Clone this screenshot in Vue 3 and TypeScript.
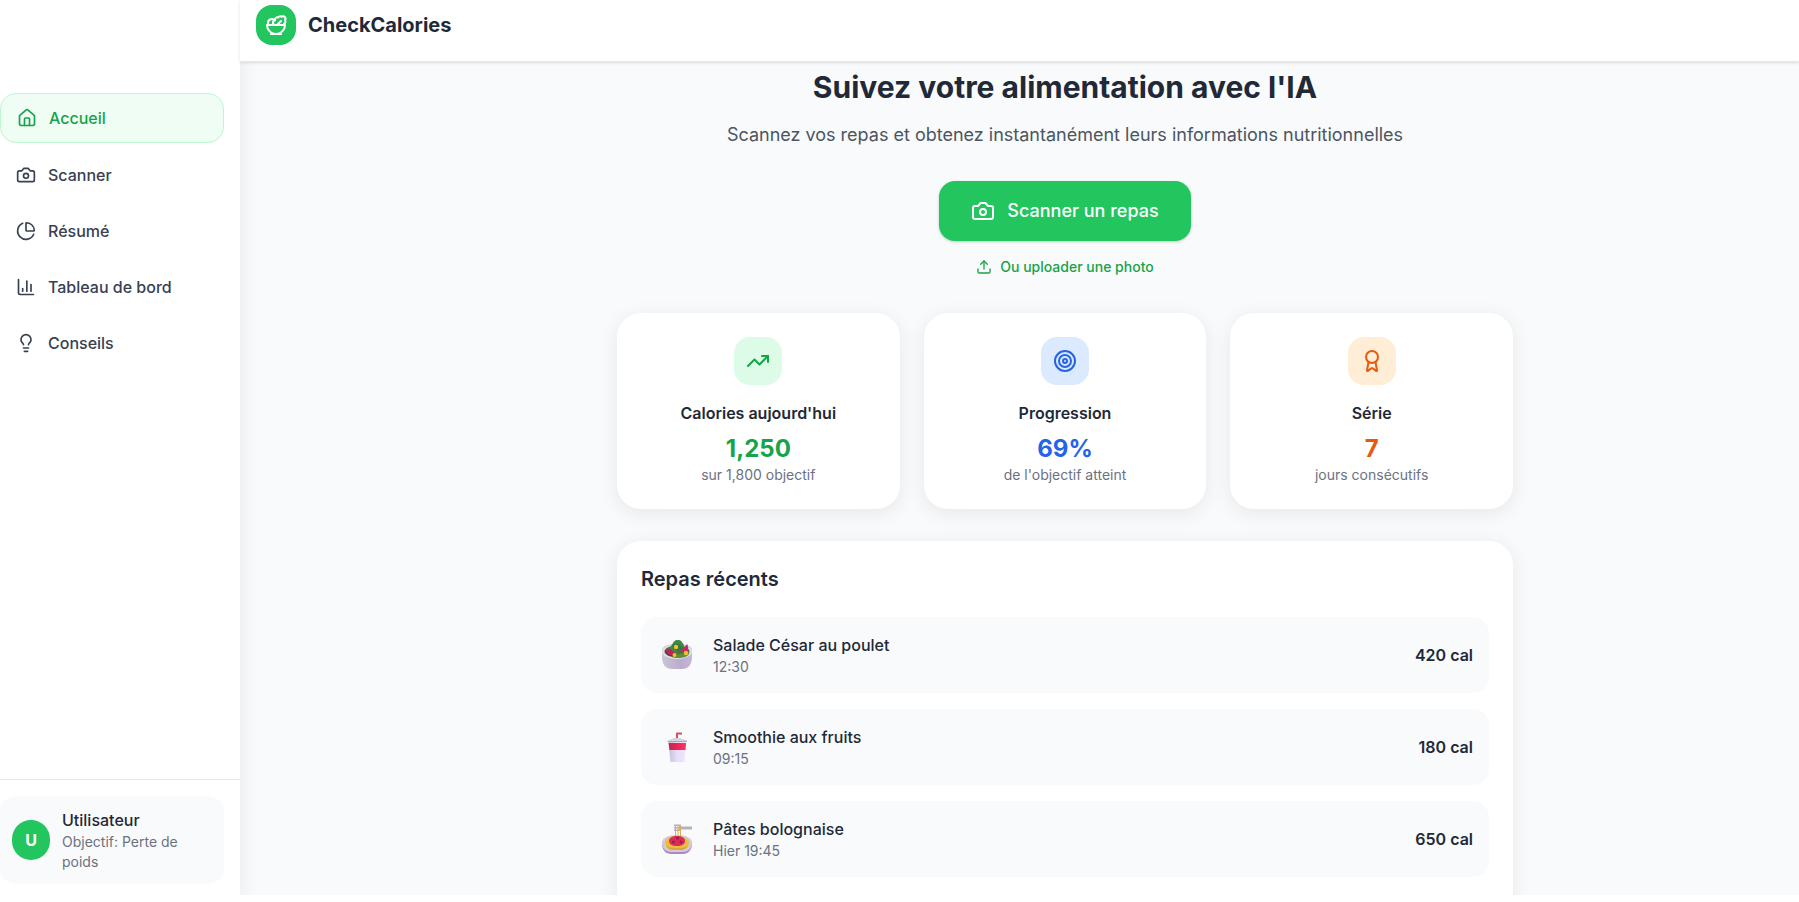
<script setup lang="ts">
interface Shape {
  paths: string[]
  circles?: [number, number, number][]
}

const icons: Record<string, Shape> = {
  salad: {
    paths: [
      'M7 21h10',
      'M12 21a9 9 0 0 0 9-9H3a9 9 0 0 0 9 9Z',
      'M11.38 12a2.4 2.4 0 0 1-.4-4.77 2.4 2.4 0 0 1 3.2-2.77 2.4 2.4 0 0 1 3.47-.63 2.4 2.4 0 0 1 3.37 3.37 2.4 2.4 0 0 1-1.1 3.7 2.51 2.51 0 0 1 .03 1.1',
      'm13 12 4-4',
      'M10.9 7.25A3.99 3.99 0 0 0 4 10c0 .73.2 1.41.54 2',
    ],
  },
  home: {
    paths: [
      'M15 21v-8a1 1 0 0 0-1-1h-4a1 1 0 0 0-1 1v8',
      'M3 10a2 2 0 0 1 .709-1.528l7-5.999a2 2 0 0 1 2.582 0l7 5.999A2 2 0 0 1 21 10v9a2 2 0 0 1-2 2H5a2 2 0 0 1-2-2z',
    ],
  },
  camera: {
    paths: ['M14.5 4h-5L7 7H4a2 2 0 0 0-2 2v9a2 2 0 0 0 2 2h16a2 2 0 0 0 2-2V9a2 2 0 0 0-2-2h-3l-2.5-3z'],
    circles: [[12, 13, 3]],
  },
  pie: {
    paths: [
      'M21 12c.552 0 1.005-.449.95-.998a10 10 0 0 0-8.953-8.951c-.55-.055-.998.398-.998.95v8a1 1 0 0 0 1 1z',
      'M21.21 15.89A10 10 0 1 1 8 2.83',
    ],
  },
  chart: { paths: ['M3 3v16a2 2 0 0 0 2 2h16', 'M18 17V9', 'M13 17V5', 'M8 17v-3'] },
  bulb: {
    paths: [
      'M15 14c.2-1 .7-1.7 1.5-2.5 1-.9 1.5-2.2 1.5-3.5A6 6 0 0 0 6 8c0 1 .2 2.2 1.5 3.5.7.7 1.3 1.5 1.5 2.5',
      'M9 18h6',
      'M10 22h4',
    ],
  },
  upload: { paths: ['M12 3v12', 'm17 8-5-5-5 5', 'M21 15v4a2 2 0 0 1-2 2H5a2 2 0 0 1-2-2v-4'] },
  trend: { paths: ['m22 7-8.5 8.5-5-5L2 17', 'M16 7h6v6'] },
  target: { paths: [], circles: [[12, 12, 10], [12, 12, 6], [12, 12, 2]] },
  award: {
    paths: [
      'm15.477 12.89 1.515 8.526a.5.5 0 0 1-.81.47l-3.58-2.687a1 1 0 0 0-1.197 0l-3.586 2.686a.5.5 0 0 1-.81-.469l1.514-8.526',
    ],
    circles: [[12, 8, 6]],
  },
}

const navItems = [
  { label: 'Accueil', icon: 'home', active: true },
  { label: 'Scanner', icon: 'camera', active: false },
  { label: 'Résumé', icon: 'pie', active: false },
  { label: 'Tableau de bord', icon: 'chart', active: false },
  { label: 'Conseils', icon: 'bulb', active: false },
]

const stats = [
  { tone: 'green', icon: 'trend', label: "Calories aujourd'hui", value: '1,250', note: 'sur 1,800 objectif' },
  { tone: 'blue', icon: 'target', label: 'Progression', value: '69%', note: "de l'objectif atteint" },
  { tone: 'orange', icon: 'award', label: 'Série', value: '7', note: 'jours consécutifs' },
]

const meals = [
  { kind: 'salad', name: 'Salade César au poulet', time: '12:30', calories: 420 },
  { kind: 'drink', name: 'Smoothie aux fruits', time: '09:15', calories: 180 },
  { kind: 'pasta', name: 'Pâtes bolognaise', time: 'Hier 19:45', calories: 650 },
]
</script>

<template>
  <div class="app">
    <aside class="sidebar">
      <nav class="nav" aria-label="Navigation principale">
        <a v-for="item in navItems" :key="item.label" href="#" class="nav-item" :class="{ active: item.active }">
          <svg class="icon icon-md" viewBox="0 0 24 24" aria-hidden="true">
            <path v-for="d in icons[item.icon].paths" :key="d" :d="d" />
            <circle v-for="c in icons[item.icon].circles" :key="c[2]" :cx="c[0]" :cy="c[1]" :r="c[2]" />
          </svg>
          <span>{{ item.label }}</span>
        </a>
      </nav>
      <div class="account">
        <div class="account-card">
          <div class="avatar">U</div>
          <div class="account-text">
            <p class="account-name">Utilisateur</p>
            <p class="account-goal">Objectif: Perte de poids</p>
          </div>
        </div>
      </div>
    </aside>

    <div class="page">
      <header class="topbar">
        <div class="logo">
          <svg class="icon icon-lg" viewBox="0 0 24 24" aria-hidden="true">
            <path v-for="d in icons.salad.paths" :key="d" :d="d" />
          </svg>
        </div>
        <span class="brand">CheckCalories</span>
      </header>

      <main class="content">
        <div class="column">
          <section class="hero">
            <h1>Suivez votre alimentation avec l'IA</h1>
            <p class="lead">Scannez vos repas et obtenez instantanément leurs informations nutritionnelles</p>
            <button type="button" class="scan">
              <svg class="icon icon-lg" viewBox="0 0 24 24" aria-hidden="true">
                <path v-for="d in icons.camera.paths" :key="d" :d="d" />
                <circle cx="12" cy="13" r="3" />
              </svg>
              <span>Scanner un repas</span>
            </button>
            <button type="button" class="upload">
              <svg class="icon icon-sm" viewBox="0 0 24 24" aria-hidden="true">
                <path v-for="d in icons.upload.paths" :key="d" :d="d" />
              </svg>
              <span>Ou uploader une photo</span>
            </button>
          </section>

          <section class="stats">
            <article v-for="stat in stats" :key="stat.label" class="stat card" :class="stat.tone">
              <div class="stat-icon">
                <svg class="icon icon-lg" viewBox="0 0 24 24" aria-hidden="true">
                  <path v-for="d in icons[stat.icon].paths" :key="d" :d="d" />
                  <circle v-for="c in icons[stat.icon].circles" :key="c[2]" :cx="c[0]" :cy="c[1]" :r="c[2]" />
                </svg>
              </div>
              <h3>{{ stat.label }}</h3>
              <p class="stat-value">{{ stat.value }}</p>
              <p class="note">{{ stat.note }}</p>
            </article>
          </section>

          <section class="meals card">
            <h2>Repas récents</h2>
            <ul>
              <li v-for="meal in meals" :key="meal.name" class="meal">
                <div class="meal-picture">
                  <svg v-if="meal.kind === 'salad'" viewBox="0 0 30 30" aria-hidden="true">
                    <defs>
                      <linearGradient id="bowl" x1="0" x2="1">
                        <stop offset="0" stop-color="#c9c5d2" />
                        <stop offset="0.6" stop-color="#bcadcd" />
                        <stop offset="1" stop-color="#c4b6d6" />
                      </linearGradient>
                    </defs>
                    <path d="M0 11C0 6 6 4 15 4s15 2 15 7v6c0 8-4 12-10 12H10C4 29 0 25 0 17z" fill="url(#bowl)" />
                    <ellipse cx="15" cy="11.500" rx="15" ry="7.500" fill="#e2dde9" />
                    <ellipse cx="15" cy="11.500" rx="12.500" ry="6" fill="#4d7a2b" />
                    <path d="M8 10c0-4 2-5 3-7 2-4 7-4 9-1 2 3 4 6 2 8-4 3-10 3-14 0z" fill="#3f8a44" />
                    <path d="M10 6c2-3 6-3 8-1 3 2 5 5 3 8-4 0-8-1-11-7z" fill="#357a40" />
                    <path d="M4 9c4-1 6 0 10 6-5 2-9 0-10-6z" fill="#c21e62" />
                    <path d="M4 10c1 5 5 6 10 5v1C8 17 4 15 3 11z" fill="#7c2448" />
                    <path d="M17 11c3-1 6-4 8-7 2 3 1 7-1 9z" fill="#cf236b" />
                    <path d="M10 17c6-2 11-5 17-3-2 4-12 5-17 3z" fill="#5b9138" />
                    <circle cx="14" cy="7" r="2.200" fill="#f4bf32" />
                    <circle cx="12.500" cy="15" r="2" fill="#f4bf32" />
                    <circle cx="24" cy="13" r="2.200" fill="#f4bf32" />
                  </svg>
                  <svg v-else-if="meal.kind === 'drink'" viewBox="0 0 30 30" aria-hidden="true">
                    <defs>
                      <linearGradient id="cup" x1="0" x2="1">
                        <stop offset="0" stop-color="#c9bedb" />
                        <stop offset="0.5" stop-color="#e8def8" />
                        <stop offset="1" stop-color="#efe4fc" />
                      </linearGradient>
                      <linearGradient id="sleeve" x1="0" x2="1">
                        <stop offset="0" stop-color="#bd2850" />
                        <stop offset="0.5" stop-color="#ed2458" />
                        <stop offset="1" stop-color="#fb3466" />
                      </linearGradient>
                    </defs>
                    <path d="M15 7V1.500h5" fill="none" stroke="#db4a66" stroke-width="2" stroke-linejoin="round" />
                    <path d="M10 8c0-2 2-2 5-2s5 0 5 2z" fill="#d3d1d5" />
                    <path d="M6 9.500C6 8 8 7 10 7h10c3 0 5 1 5 2.500z" fill="#d8d5dd" />
                    <path d="M6.500 10h17.500l-1.500 20h-14z" fill="url(#cup)" />
                    <path d="M6.500 11h17.500l-.5 7h-16z" fill="url(#sleeve)" />
                    <path d="M5.500 9.500h19.500" stroke="#aaa4b4" />
                  </svg>
                  <svg v-else viewBox="0 0 30 30" aria-hidden="true">
                    <path d="M0 20c0-5 6-8 15-8s15 3 15 8c0 6-4 10-9 10H9c-5 0-9-4-9-10z" fill="#a989c5" />
                    <path d="M0 19c0-5 6-8 15-8s15 3 15 8c0 5-4 9-9 9H9c-5 0-9-4-9-9z" fill="#d2c9d9" />
                    <path d="M3 19c0-4 5-7 12-7s12 3 12 7-4 7-8 7h-8c-4 0-8-3-8-7z" fill="#edbd3c" />
                    <path d="M4 21c3 3 6 3 11 3s8 0 11-3c-1 3-4 5-7 5h-8c-3 0-6-2-7-5z" fill="#dda534" />
                    <path d="M12 .500h7v2h11v3H19v1.500h-7v-1.500h5v-1h-5V3h5V2h-5z" fill="#b8b0bd" />
                    <path d="M13.500 2v11M16 2v11M18.500 2v11" fill="none" stroke="#dcae50" />
                    <path d="M7 17c0-3 3-5 8-5s8 2 8 5-3 5-8 5-8-2-8-5z" fill="#dc2a5a" />
                    <circle cx="15.500" cy="14" r="1.500" fill="#8f2740" />
                    <circle cx="11.500" cy="18" r="1.500" fill="#8f2740" />
                    <circle cx="19" cy="18" r="1.500" fill="#8f2740" />
                  </svg>
                </div>
                <div class="meal-text">
                  <p class="meal-name">{{ meal.name }}</p>
                  <p class="note">{{ meal.time }}</p>
                </div>
                <p class="meal-calories">{{ meal.calories }} cal</p>
              </li>
            </ul>
          </section>
        </div>
      </main>
    </div>
  </div>
</template>

<style>
body {
  background: #ffffff;
  overflow: hidden;
}
</style>

<style scoped>
.app {
  display: flex;
  height: calc(100vh - 7px);
  overflow: hidden;
  background: #f9fafb;
  color: #1f2937;
  font-family: Inter, "Liberation Sans", sans-serif;
  font-size: 16px;
  line-height: 24px;
}

.app *,
.app {
  box-sizing: border-box;
}

h1,
h2,
h3,
p,
ul {
  margin: 0;
  padding: 0;
}

button {
  border: 0;
  background: none;
  font-family: inherit;
  cursor: pointer;
}

.icon {
  flex: none;
  fill: none;
  stroke: currentColor;
  stroke-width: 2;
  stroke-linecap: round;
  stroke-linejoin: round;
}

.icon-sm {
  width: 16px;
  height: 16px;
}

.icon-md {
  width: 20px;
  height: 20px;
}

.icon-lg {
  width: 24px;
  height: 24px;
}

.sidebar {
  display: flex;
  flex: none;
  flex-direction: column;
  justify-content: space-between;
  width: 240px;
  padding-top: 93px;
  background: #ffffff;
  box-shadow: 0 4px 20px rgba(0, 0, 0, 0.08);
}

.nav {
  display: flex;
  flex-direction: column;
  gap: 8px;
  padding-right: 16px;
}

.nav-item {
  display: flex;
  align-items: center;
  gap: 12px;
  padding: 12px 16px;
  border-radius: 16px;
  color: #374151;
  font-weight: 500;
  text-decoration: none;
}

.nav-item.active {
  border: 1px solid #bbf7d0;
  background: #f0fdf4;
  color: #16a34a;
}

.account {
  padding: 16px 16px 11px 0;
  border-top: 1px solid #e5e7eb;
}

.account-card {
  display: flex;
  align-items: center;
  gap: 12px;
  padding: 12px;
  border-radius: 16px;
  background: #f9fafb;
}

.avatar {
  display: flex;
  flex: none;
  align-items: center;
  justify-content: center;
  width: 38px;
  height: 40px;
  border-radius: 20px;
  background: #22c55e;
  color: #ffffff;
  font-weight: 700;
}

.account-name,
.meal-name {
  font-weight: 500;
}

.account-goal,
.note {
  color: #6b7280;
  font-size: 14px;
  line-height: 20px;
}

.page {
  display: flex;
  flex: 1;
  flex-direction: column;
  min-width: 0;
}

.topbar {
  position: relative;
  display: flex;
  flex: none;
  align-items: center;
  gap: 12px;
  padding: 5px 16px 16px;
  border-bottom: 1px solid #e5e7eb;
  background: #ffffff;
  box-shadow: 0 1px 3px rgba(0, 0, 0, 0.12);
}

.logo {
  display: flex;
  align-items: center;
  justify-content: center;
  width: 40px;
  height: 40px;
  border-radius: 16px;
  background: #22c55e;
  color: #ffffff;
}

.brand {
  font-size: 20px;
  font-weight: 700;
  line-height: 28px;
}

.content {
  padding: 7px 0 0 91px;
}

.column {
  max-width: 896px;
  margin: 0 auto;
}

.hero {
  display: flex;
  flex-direction: column;
  align-items: center;
  margin-bottom: 36px;
  text-align: center;
}

h1 {
  margin-bottom: 16px;
  font-size: 30px;
  font-weight: 700;
  line-height: 36px;
}

.lead {
  margin-bottom: 32px;
  color: #4b5563;
  font-size: 18px;
  line-height: 28px;
}

.scan {
  display: flex;
  align-items: center;
  gap: 12px;
  margin-bottom: 16px;
  padding: 16px 32px;
  border-radius: 16px;
  background: #22c55e;
  color: #ffffff;
  font-size: 18px;
  font-weight: 500;
  line-height: 28px;
  box-shadow: 0 1px 3px rgba(0, 0, 0, 0.2);
}

.upload {
  display: flex;
  align-items: center;
  gap: 8px;
  padding: 0;
  color: #16a34a;
  font-size: 14px;
  font-weight: 500;
  line-height: 20px;
}

.card {
  padding: 24px;
  border-radius: 24px;
  background: #ffffff;
  box-shadow: 0 4px 20px rgba(0, 0, 0, 0.08);
}

.card.meals {
  padding-bottom: 72px;
}

.stats {
  display: grid;
  grid-template-columns: repeat(3, 1fr);
  gap: 24px;
  margin-bottom: 32px;
}

.stat {
  display: flex;
  flex-direction: column;
  align-items: center;
  text-align: center;
}

.stat-icon {
  display: flex;
  align-items: center;
  justify-content: center;
  width: 48px;
  height: 48px;
  margin-bottom: 16px;
  border-radius: 16px;
}

h3 {
  margin-bottom: 8px;
  font-size: 16px;
  font-weight: 600;
  line-height: 24px;
}

.stat-value {
  font-size: 24px;
  font-weight: 700;
  line-height: 32px;
}

.green .stat-icon {
  background: #dcfce7;
}

.blue .stat-icon {
  background: #dbeafe;
}

.orange .stat-icon {
  background: #ffedd5;
}

.green .stat-icon,
.green .stat-value {
  color: #16a34a;
}

.blue .stat-icon,
.blue .stat-value {
  color: #2563eb;
}

.orange .stat-icon,
.orange .stat-value {
  color: #ea580c;
}

h2 {
  margin-bottom: 24px;
  font-size: 20px;
  font-weight: 600;
  line-height: 28px;
}

ul {
  display: flex;
  flex-direction: column;
  gap: 16px;
  list-style: none;
}

.meal {
  display: flex;
  align-items: center;
  gap: 16px;
  padding: 16px;
  border-radius: 16px;
  background: #f9fafb;
}

.meal-picture {
  display: flex;
  justify-content: center;
  width: 40px;
}

.meal-picture svg {
  width: 30px;
  height: 30px;
}

.meal-text {
  flex: 1;
}

.meal-calories {
  font-weight: 600;
}
</style>
